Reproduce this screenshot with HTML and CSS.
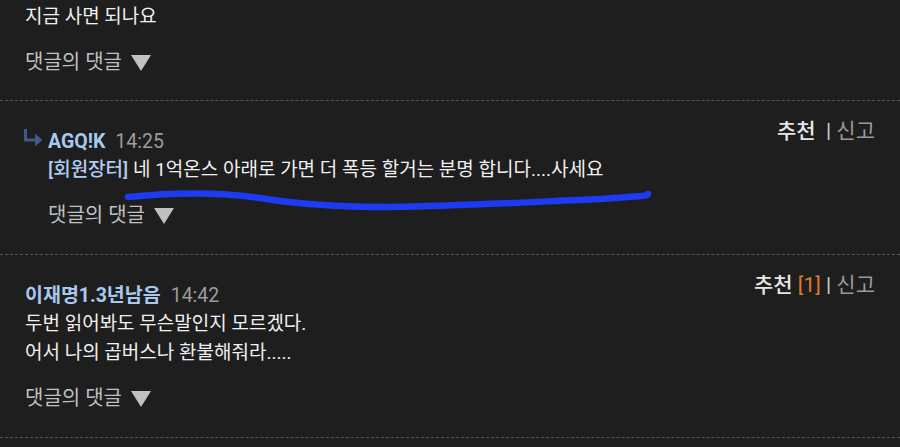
FILE: index.html
```html
<!DOCTYPE html>
<html lang="ko">
<head>
  <meta charset="UTF-8">
  <meta name="viewport" content="width=device-width, initial-scale=1.0">
  <title>댓글</title>
  <link rel="stylesheet" href="styles.css">
</head>
<body>
  <div class="comments">
    <div class="comment first">
      <p class="text">지금 사면 되나요</p>
      <a href="#" class="more">댓글의 댓글 <span class="arrow"></span></a>
    </div>

    <div class="comment reply">
      <div class="head">
        <div class="who">
          <svg class="reply-icon" width="20" height="18" viewBox="0 0 20 18">
            <path d="M2.5 0 V11 H13" fill="none" stroke="#3b5b8a" stroke-width="3"/>
            <path d="M12 4.5 L19.5 11 L12 17.5 Z" fill="#3b5b8a"/>
          </svg>
          <span class="name">AGQ!K</span>
          <span class="time">14:25</span>
        </div>
        <div class="actions">
          <span class="like">추천</span>&nbsp; <span class="sep">|</span> <span class="report">신고</span>
        </div>
      </div>
      <p class="text"><span class="tag">[회원장터]</span> 네 1억온스 아래로 가면 더 폭등 할거는 분명 합니다....사세요</p>
      <a href="#" class="more">댓글의 댓글 <span class="arrow"></span></a>
    </div>

    <div class="comment">
      <div class="head">
        <div class="who">
          <span class="name">이재명1.3년남음</span>
          <span class="time">14:42</span>
        </div>
        <div class="actions">
          <span class="like">추천</span> <span class="count">[1]</span> <span class="sep">|</span> <span class="report">신고</span>
        </div>
      </div>
      <p class="text">두번 읽어봐도 무슨말인지 모르겠다.<br>어서 나의 곱버스나 환불해줘라.....</p>
      <a href="#" class="more">댓글의 댓글 <span class="arrow"></span></a>
    </div>
  </div>

  <!-- hand drawn underline over the page -->
  <svg class="scribble" width="900" height="447" viewBox="0 0 900 447">
    <path d="M128 197 C 170 193, 220 192, 260 198 C 290 203, 330 207, 390 207 C 460 206, 530 202, 600 199 L 642 196 Q 648 195.5, 648 194" fill="none" stroke="#1d3cf2" stroke-width="6.5" stroke-linecap="round" stroke-linejoin="round"/>
  </svg>
</body>
</html>
```

FILE: styles.css
```css
* {
  box-sizing: border-box;
  margin: 0;
  padding: 0;
}
body {
  background: #1e1e1e;
  color: #f0f0f0;
  font-family: Roboto, "Noto Sans CJK KR", sans-serif;
  font-size: 19px;
  line-height: 29px;
  position: relative;
  width: 900px;
  height: 447px;
  overflow: hidden;
}
.comment {
  padding: 26px 25px 24px 25px;
  border-bottom: 1px dashed #555555;
}
.comment.first {
  padding-top: 3px;
  padding-bottom: 23px;
}
.comment.reply {
  padding-left: 48px;
}
.head {
  display: flex;
  justify-content: space-between;
  align-items: flex-start;
}
.who {
  display: flex;
  align-items: center;
  gap: 10px;
  position: relative;
  font-size: 19.5px;
}
.reply-icon {
  position: absolute;
  left: -25px;
  top: 1.5px;
}
.name {
  color: #a9c8f0;
  font-weight: 700;
}
.time {
  color: #9c9c9c;
}
.actions {
  margin-top: -10px;
  font-size: 21px;
  color: #9a9a9a;
}
.like {
  color: #e6e6e6;
  font-weight: 500;
}
.sep {
  color: #d0d0d0;
}
.count {
  color: #e0792a;
}
.text {
  margin-top: -1px;
}
.tag {
  color: #aecbf2;
  font-weight: 500;
}
.more {
  display: inline-flex;
  align-items: center;
  margin-top: 17px;
  font-size: 20px;
  color: #c0c0c0;
  text-decoration: none;
}
.arrow {
  width: 0;
  height: 0;
  margin-left: 9px;
  margin-top: 1px;
  border-left: 10px solid transparent;
  border-right: 10px solid transparent;
  border-top: 16px solid #c0c0c0;
}
.scribble {
  position: absolute;
  left: 0;
  top: 0;
  pointer-events: none;
}
```
